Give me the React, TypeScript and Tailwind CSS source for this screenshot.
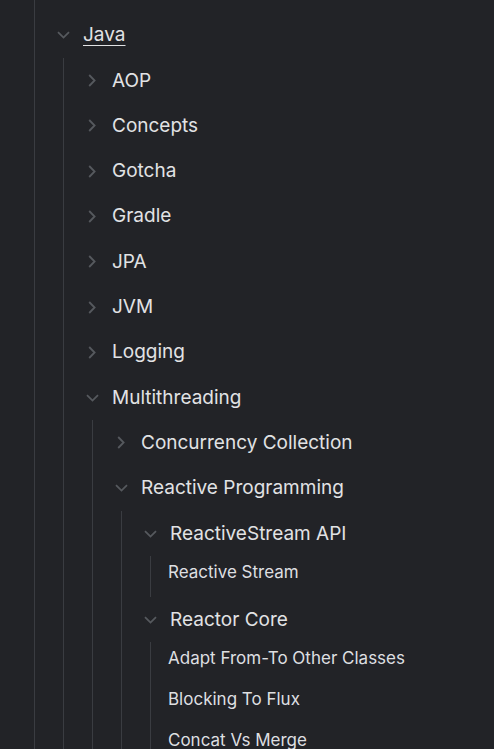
import React from "react";

type Node = {
  label: string;
  open?: boolean;
  active?: boolean;
  leaf?: boolean;
  children?: Node[];
};

const tree: Node[] = [
  { label: "gRPC" },
  {
    label: "Java",
    open: true,
    active: true,
    children: [
      { label: "AOP" },
      { label: "Concepts" },
      { label: "Gotcha" },
      { label: "Gradle" },
      { label: "JPA" },
      { label: "JVM" },
      { label: "Logging" },
      {
        label: "Multithreading",
        open: true,
        children: [
          { label: "Concurrency Collection" },
          {
            label: "Reactive Programming",
            open: true,
            children: [
              {
                label: "ReactiveStream API",
                open: true,
                children: [{ label: "Reactive Stream", leaf: true }],
              },
              {
                label: "Reactor Core",
                open: true,
                children: [
                  { label: "Adapt From-To Other Classes", leaf: true },
                  { label: "Blocking To Flux", leaf: true },
                  { label: "Concat Vs Merge", leaf: true },
                  { label: "Error Handling", leaf: true },
                ],
              },
            ],
          },
        ],
      },
    ],
  },
];

function Chevron({ open }: { open?: boolean }) {
  return (
    <span className="flex w-5 shrink-0 items-center justify-center text-[#56595e]">
      {open ? (
        <svg width="13" height="8" viewBox="0 0 13 8" fill="none">
          <path d="M1 1.2 6.5 6.6 12 1.2" stroke="currentColor" strokeWidth="1.8" />
        </svg>
      ) : (
        <svg width="8" height="13" viewBox="0 0 8 13" fill="none">
          <path d="M1.2 1 6.6 6.5 1.2 12" stroke="currentColor" strokeWidth="1.8" />
        </svg>
      )}
    </span>
  );
}

function TreeNode({ node }: { node: Node }) {
  if (node.leaf) {
    return (
      <li className="h-[41px] pt-[5px] text-[17px] leading-[22px] text-[#dedfe1]">
        {node.label}
      </li>
    );
  }

  const leafKids = node.children?.every((c) => c.leaf);

  return (
    <li>
      <div className="flex h-[45.3px] items-center gap-2.5">
        <Chevron open={node.open} />
        <span
          className={
            "text-[19px] leading-6 text-[#e1e2e4]" +
            (node.active ? " underline decoration-1 underline-offset-[4px]" : "")
          }
        >
          {node.label}
        </span>
      </div>
      {node.open && node.children && (
        <ul
          className={
            leafKids
              ? "ml-[10px] border-l border-[#3a3c41] pl-[17px]"
              : "ml-[10px] border-l border-[#3a3c41] pl-[18px]"
          }
        >
          {node.children.map((c) => (
            <TreeNode key={c.label} node={c} />
          ))}
        </ul>
      )}
    </li>
  );
}

export default function App() {
  return (
    <div
      className="h-screen overflow-hidden bg-[#222327]"
      style={{ fontFamily: "Inter, 'Noto Sans', sans-serif" }}
    >
      <ul className="-mt-[32.7px] ml-[34px] border-l border-[#3a3c41] pl-[18px]">
        {tree.map((n) => (
          <TreeNode key={n.label} node={n} />
        ))}
      </ul>
    </div>
  );
}
